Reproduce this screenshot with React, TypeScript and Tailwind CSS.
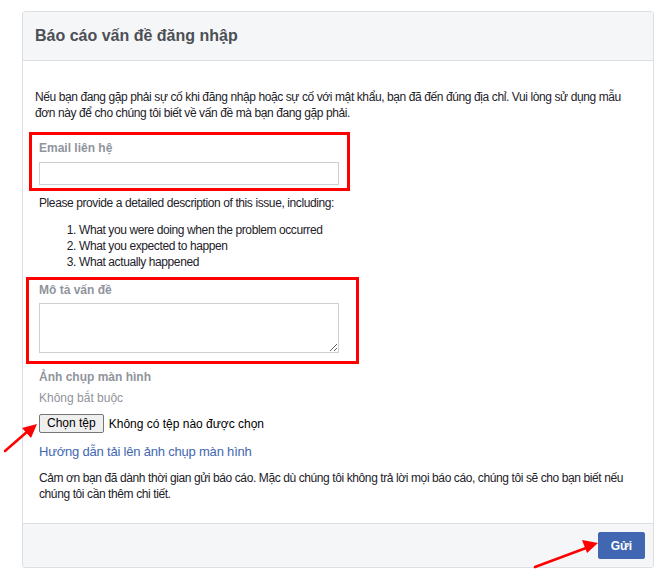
import React from "react";

export default function App() {
  return (
    <div
      className="relative w-[664px] h-[577px] bg-white pt-[11px] pl-[22px]"
      style={{ fontFamily: '"Liberation Sans", Arial, Helvetica, sans-serif' }}
    >
      <div className="relative w-[632px] border border-[#dddfe2] rounded-[3px] bg-white">
        {/* header */}
        <div className="h-[49px] bg-[#f5f6f7] border-b border-[#dddfe2] px-[12px] flex items-center rounded-t-[3px]">
          <h2 className="text-[16px] font-bold text-[#4b4f56] leading-[20px]">Báo cáo vấn đề đăng nhập</h2>
        </div>

        {/* body */}
        <div className="px-[12px] pt-[28px] pb-[21px] text-[12px] leading-[16px] text-[#1d2129]">
          <p className="pr-[10px] tracking-[-0.4px]">
            Nếu bạn đang gặp phải sự cố khi đăng nhập hoặc sự cố với mật khẩu, bạn đã đến đúng địa chỉ. Vui lòng sử dụng mẫu đơn này để cho chúng tôi biết về vấn đề mà bạn đang gặp phải.
          </p>

          <div className="pl-[4px]">
            <div className="mt-[19px] font-bold text-[#90949c]">Email liên hệ</div>
            <input
              type="text"
              className="mt-[6px] block w-[300px] h-[23px] border border-[#ccd0d5] bg-white outline-none"
            />

            <div className="mt-[10px] tracking-[-0.4px]">Please provide a detailed description of this issue, including:</div>
            <ol className="mt-[11px] list-decimal pl-[40px] tracking-[-0.4px]">
              <li>What you were doing when the problem occurred</li>
              <li>What you expected to happen</li>
              <li>What actually happened</li>
            </ol>

            <div className="mt-[12px] font-bold text-[#90949c]">Mô tả vấn đề</div>
            <textarea className="mt-[5px] block w-[300px] h-[50px] border border-[#ccd0d5] bg-white outline-none" />

            <div className="mt-[16px] font-bold text-[#90949c]">Ảnh chụp màn hình</div>
            <div className="mt-[5px] text-[#90949c]">Không bắt buộc</div>

            <div className="mt-[8px] flex items-center h-[19px] text-[12px] text-black">
              <button className="h-[19px] px-[7px] border border-[#767676] bg-[#efefef] rounded-[2px] text-[12px] leading-[15px] text-black">
                Chọn tệp
              </button>
              <span className="ml-[5px]">Không có tệp nào được chọn</span>
            </div>

            <div className="mt-[11px] text-[13px] tracking-[-0.2px]">
              <a className="text-[#4267b2]">Hướng dẫn tải lên ảnh chụp màn hình</a>
            </div>

            <p className="mt-[10px] pr-[10px] tracking-[-0.4px]">
              Cảm ơn bạn đã dành thời gian gửi báo cáo. Mặc dù chúng tôi không trả lời mọi báo cáo, chúng tôi sẽ cho bạn biết nếu chúng tôi cần thêm chi tiết.
            </p>
          </div>
        </div>

        {/* footer */}
        <div className="bg-[#f5f6f7] border-t border-[#dddfe2] p-[8px] flex justify-end rounded-b-[3px]">
          <button className="h-[27px] px-[12px] bg-[#4267b2] border border-[#4267b2] rounded-[2px] text-white text-[12px] font-bold">
            Gửi
          </button>
        </div>

        {/* annotation boxes */}
        <div className="pointer-events-none absolute left-[6px] top-[120px] w-[321px] h-[59px] border-[3px] border-[#ff0000]" />
        <div className="pointer-events-none absolute left-[3px] top-[265px] w-[333px] h-[87px] border-[3px] border-[#ff0000]" />
      </div>

      {/* arrows */}
      <svg className="pointer-events-none absolute left-0 top-0" width="664" height="577" viewBox="0 0 664 577">
        <line x1="5" y1="451" x2="28" y2="431" stroke="#f00" strokeWidth="2.5" strokeLinecap="round" />
        <polygon points="37,424 22,428 31,438" fill="#f00" />
        <line x1="535" y1="567" x2="586" y2="548" stroke="#f00" strokeWidth="2.5" strokeLinecap="round" />
        <polygon points="598,543 582,540 587,553" fill="#f00" />
      </svg>
    </div>
  );
}
